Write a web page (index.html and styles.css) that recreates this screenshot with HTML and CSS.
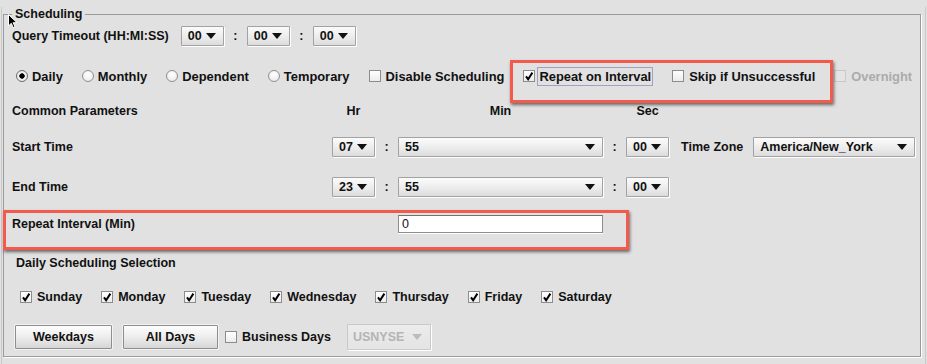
FILE: index.html
```html
<!DOCTYPE html>
<html lang="en">
<head>
    <meta charset="UTF-8" />
    <title>Scheduling</title>
    <link rel="stylesheet" href="styles.css">
</head>
<body>
    <div class="page">
        <!-- mouse pointer and red annotation boxes sit over the form -->
        <svg class="cursor" viewBox="0 0 10 15" width="10" height="15">
            <path d="M0.5 0.5 L0.5 12 L3.3 9.3 L5.2 13.6 L7 12.8 L5.2 8.7 L9 8.7 Z" />
        </svg>
        <div class="mark mark-repeat"></div>
        <div class="mark mark-interval"></div>

        <fieldset class="scheduling">
            <legend>Scheduling</legend>

            <div class="row row-timeout">
                <span class="label">Query Timeout (HH:MI:SS)</span>
                <div class="combo"><span>00</span><i class="arrow"></i></div>
                <span class="colon">:</span>
                <div class="combo"><span>00</span><i class="arrow"></i></div>
                <span class="colon">:</span>
                <div class="combo"><span>00</span><i class="arrow"></i></div>
            </div>

            <div class="row row-type">
                <label class="opt"><span class="radio on"></span>Daily</label>
                <label class="opt"><span class="radio"></span>Monthly</label>
                <label class="opt"><span class="radio"></span>Dependent</label>
                <label class="opt"><span class="radio"></span>Temporary</label>
                <label class="opt box"><span class="check"></span>Disable Scheduling</label>
                <label class="opt box focused"><span class="check"><svg viewBox="0 0 12 12"><path d="M3 6.4 5.1 9.2 9.4 2.6" /></svg></span><span class="focus">Repeat on Interval</span></label>
                <label class="opt box"><span class="check"></span>Skip if Unsuccessful</label>
                <label class="opt box disabled"><span class="check"></span>Overnight</label>
            </div>

            <div class="row grid row-head">
                <span class="label">Common Parameters</span>
                <span class="head">Hr</span>
                <span></span>
                <span class="head">Min</span>
                <span></span>
                <span class="head">Sec</span>
            </div>

            <div class="row grid row-start">
                <span class="label">Start Time</span>
                <div class="combo"><span>07</span><i class="arrow"></i></div>
                <span class="colon">:</span>
                <div class="combo"><span>55</span><i class="arrow"></i></div>
                <span class="colon">:</span>
                <div class="combo"><span>00</span><i class="arrow"></i></div>
                <div class="zone">
                    <span class="label">Time Zone</span>
                    <div class="combo combo-zone"><span>America/New_York</span><i class="arrow"></i></div>
                </div>
            </div>

            <div class="row grid row-end">
                <span class="label">End Time</span>
                <div class="combo"><span>23</span><i class="arrow"></i></div>
                <span class="colon">:</span>
                <div class="combo"><span>55</span><i class="arrow"></i></div>
                <span class="colon">:</span>
                <div class="combo"><span>00</span><i class="arrow"></i></div>
            </div>

            <div class="row grid row-interval">
                <span class="label">Repeat Interval (Min)</span>
                <span></span>
                <span></span>
                <input class="field" type="text" value="0" />
            </div>

            <div class="row row-daily">
                <span class="label">Daily Scheduling Selection</span>
            </div>

            <div class="row row-days">
                <label class="opt box"><span class="check"><svg viewBox="0 0 12 12"><path d="M3 6.4 5.1 9.2 9.4 2.6" /></svg></span>Sunday</label>
                <label class="opt box"><span class="check"><svg viewBox="0 0 12 12"><path d="M3 6.4 5.1 9.2 9.4 2.6" /></svg></span>Monday</label>
                <label class="opt box"><span class="check"><svg viewBox="0 0 12 12"><path d="M3 6.4 5.1 9.2 9.4 2.6" /></svg></span>Tuesday</label>
                <label class="opt box"><span class="check"><svg viewBox="0 0 12 12"><path d="M3 6.4 5.1 9.2 9.4 2.6" /></svg></span>Wednesday</label>
                <label class="opt box"><span class="check"><svg viewBox="0 0 12 12"><path d="M3 6.4 5.1 9.2 9.4 2.6" /></svg></span>Thursday</label>
                <label class="opt box"><span class="check"><svg viewBox="0 0 12 12"><path d="M3 6.4 5.1 9.2 9.4 2.6" /></svg></span>Friday</label>
                <label class="opt box"><span class="check"><svg viewBox="0 0 12 12"><path d="M3 6.4 5.1 9.2 9.4 2.6" /></svg></span>Saturday</label>
            </div>

            <div class="row row-buttons">
                <button class="btn btn-weekdays">Weekdays</button>
                <button class="btn btn-all">All Days</button>
                <label class="opt box business"><span class="check"></span>Business Days</label>
                <div class="combo combo-off"><span>USNYSE</span><i class="arrow"></i></div>
            </div>
        </fieldset>
    </div>
</body>
</html>
```

FILE: styles.css
```css
body {
    margin: 0;
    background: #e1e1e1;
    font: bold 12.5px "Liberation Sans", Arial, sans-serif;
    color: #111;
}

.page {
    position: relative;
    width: 923px;
    height: 364px;
    margin-left: 1px;
    border-left: 1px solid #c9c9c9;
    border-right: 1px solid #c9c9c9;
}

.cursor {
    position: absolute;
    left: 6px;
    top: 7px;
    z-index: 3;
}

    .cursor path {
        fill: #000;
        stroke: #fff;
        stroke-width: 1;
    }

/* red annotation rectangles */
.mark {
    position: absolute;
    box-sizing: border-box;
    border: 3px solid #f45a4c;
    box-shadow: 1px 2px 3px rgba(0, 0, 0, 0.55);
    z-index: 2;
}

.mark-repeat {
    left: 508px;
    top: 53px;
    width: 323px;
    height: 43px;
}

.mark-interval {
    left: 1px;
    top: 203px;
    width: 626px;
    height: 40px;
}

.scheduling {
    box-sizing: border-box;
    width: 918px;
    height: 350px;
    margin: 7px 0 0 1px;
    padding: 0;
    border: 1px solid #9a9a9a;
    box-shadow: 1px 1px 0 #fff;
}

    .scheduling legend {
        margin-left: 8px;
        padding: 0 3px;
        line-height: 15px;
    }

.row {
    display: flex;
    align-items: center;
    height: 24px;
    padding-left: 8px;
    white-space: nowrap;
}

.row-timeout { margin-top: 2px; }
.row-type { margin-top: 16px; padding-left: 12px; gap: 19px; font-size: 12.9px; }
.row-head { margin-top: 11px; }
.row-start { margin-top: 12px; }
.row-end { margin-top: 16px; }
.row-interval { margin-top: 13px; }
.row-daily { margin-top: 15px; padding-left: 12px; }
.row-days { margin-top: 10px; padding-left: 16px; gap: 19px; }
.row-buttons { margin-top: 16px; padding-left: 11px; }

.grid {
    display: grid;
    grid-template-columns: 320px 43px 23px 205px 23px 43px auto;
}

.head {
    text-align: center;
}

.colon {
    text-align: center;
}

.row-timeout .combo {
    width: 43px;
}

.row-timeout .label {
    margin-right: 12px;
}

.row-timeout .colon {
    width: 23px;
}

/* combo boxes */
.combo {
    display: flex;
    align-items: center;
    justify-content: space-between;
    box-sizing: border-box;
    height: 20px;
    padding: 0 7px 0 6px;
    border: 1px solid #a2a2a2;
    border-radius: 1px;
    background: linear-gradient(#fbfbfb, #ececec 55%, #dcdcdc);
    box-shadow: 1px 1px 0 #fff;
}

.arrow {
    width: 0;
    height: 0;
    border-left: 5px solid transparent;
    border-right: 5px solid transparent;
    border-top: 6px solid #111;
}

.zone {
    display: flex;
    align-items: center;
    gap: 10px;
    margin-left: 12px;
}

.combo-zone {
    width: 162px;
}

.combo-off {
    width: 84px;
    height: 26px;
    margin-left: 16px;
    padding: 0 8px 0 5px;
    color: #b4b4b4;
    border-color: #c9c9c9;
    background: linear-gradient(#ececec, #e4e4e4);
}

    .combo-off .arrow {
        border-top-color: #bcbcbc;
    }

/* radios and checkboxes */
.opt {
    display: flex;
    flex-shrink: 0;
    align-items: center;
    gap: 4px;
}

    .opt.box {
        gap: 5px;
    }

    .opt.focused {
        gap: 2px;
    }

.focus {
    padding: 1px 1px;
    border: 1px solid #a39fc2;
}

.radio {
    box-sizing: border-box;
    width: 12px;
    height: 12px;
    border: 1px solid #8f8f8f;
    border-radius: 50%;
    background: radial-gradient(circle at 50% 35%, #fff, #e6e6e6);
}

    .radio.on {
        border-color: #6c6c6c;
        background: radial-gradient(circle, #000 2.4px, #f4f4f4 3px, #dedede);
    }

.check {
    box-sizing: border-box;
    flex-shrink: 0;
    width: 12px;
    height: 12px;
    border: 1px solid #8c8c8c;
    background: linear-gradient(#fff, #ececec);
}

    .check svg {
        display: block;
        width: 12px;
        height: 12px;
        margin: -1px;
        fill: none;
        stroke: #000;
        stroke-width: 2;
    }

.disabled {
    color: #ababab;
}

    .disabled .check {
        border-color: #c8c8c8;
        background: #e4e4e4;
    }

.field {
    box-sizing: border-box;
    width: 205px;
    height: 18px;
    margin: 0;
    padding: 0 3px;
    border: 1px solid #8d8d8d;
    border-top-color: #707070;
    background: #fff;
    box-shadow: 0 1px 0 #fff;
    font: 12.5px "Liberation Sans", Arial, sans-serif;
    color: #111;
}

.btn {
    box-sizing: border-box;
    height: 24px;
    padding: 0;
    border: 1px solid #8e8e8e;
    border-radius: 1px;
    background: linear-gradient(#fdfdfd, #ebebeb 55%, #d6d6d6);
    box-shadow: 0 0 0 1px #f3f3f3;
    font: inherit;
    color: #111;
}

.btn-weekdays {
    width: 97px;
}

.btn-all {
    width: 95px;
    margin-left: 11px;
}

.business {
    margin-left: 7px;
}
```
